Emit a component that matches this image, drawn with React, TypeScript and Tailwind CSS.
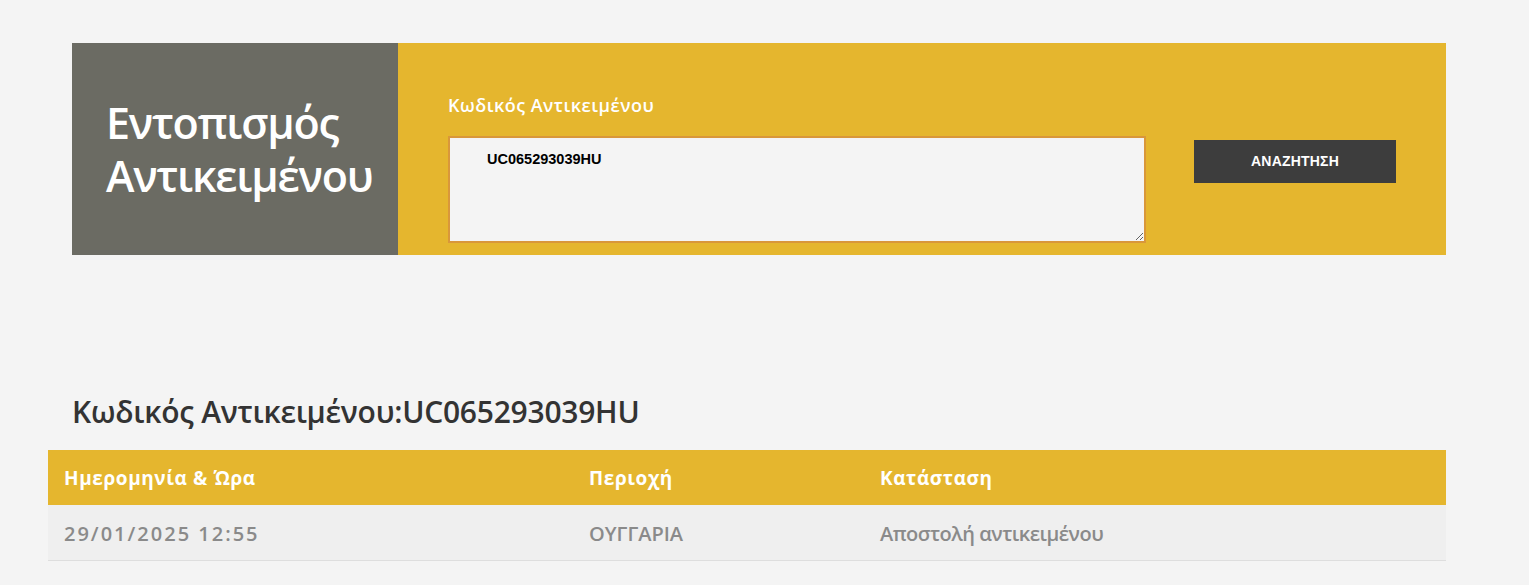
import React, { useState } from 'react';

const rows = [
  { date: '29/01/2025 12:55', area: 'ΟΥΓΓΑΡΙΑ', status: 'Αποστολή αντικειμένου' },
];

const App: React.FC = () => {
  const [code, setCode] = useState('UC065293039HU');

  return (
    <div className="min-h-screen bg-[#f4f4f4] font-['Open_Sans',sans-serif]">
      <div className="pt-[43px] pl-[72px] pr-[83px]">
        <div className="flex h-[212px]">
          <div className="w-[326px] bg-[#6b6b63] flex items-center pl-[34px]">
            <h1 className="text-white text-[43px] leading-[53px] font-semibold tracking-[-1.2px]">
              Εντοπισμός<br />Αντικειμένου
            </h1>
          </div>
          <div className="flex-1 bg-[#e5b62e] flex pl-[50px] pt-[48px]">
            <div className="w-[698px]">
              <label className="block text-white text-[18px] leading-[28px] font-semibold tracking-[0.5px] mb-[17px]">Κωδικός Αντικειμένου</label>
              <textarea
                value={code}
                onChange={e => setCode(e.target.value)}
                className="block w-[698px] h-[107px] bg-[#f4f4f4] border-2 border-[#d9973a] pl-[37px] pt-[11px] text-[14.5px] font-bold text-black font-['Liberation_Sans',sans-serif] outline-none"
              />
            </div>
            <div className="pl-[48px] pt-[49px]">
              <button className="w-[202px] h-[43px] bg-[#3d3d3d] text-white text-[14px] font-bold font-['Liberation_Sans',sans-serif] tracking-[0.2px]">
                ΑΝΑΖΗΤΗΣΗ
              </button>
            </div>
          </div>
        </div>
      </div>

      <div className="pl-[48px] pr-[83px] pt-[137px]">
        <h2 className="pl-[24px] text-[#333] text-[30px] leading-[40px] font-semibold tracking-[-0.25px]">
          Κωδικός Αντικειμένου:UC065293039HU
        </h2>
        <table className="w-full mt-[18px] border-collapse">
          <thead>
            <tr className="bg-[#e5b62e] h-[55px] text-white text-[19px] font-bold text-left tracking-[0.6px]">
              <th className="pl-[16px] w-[541px] pt-[2px]">Ημερομηνία &amp; Ώρα</th>
              <th className="w-[291px] pt-[2px]">Περιοχή</th>
              <th className="pt-[2px]">Κατάσταση</th>
            </tr>
          </thead>
          <tbody>
            {rows.map((r, i) => (
              <tr key={i} className="bg-[#efefef] h-[55px] border-b border-[#dedede] text-[#8a8a8a] text-[20px] font-semibold">
                <td className="pl-[16px] pt-[4px] tracking-[2px]">{r.date}</td>
                <td className="pt-[4px] tracking-[0px]">{r.area}</td>
                <td className="pt-[4px] tracking-[-0.5px]">{r.status}</td>
              </tr>
            ))}
          </tbody>
        </table>
      </div>
    </div>
  );
};

export default App;
